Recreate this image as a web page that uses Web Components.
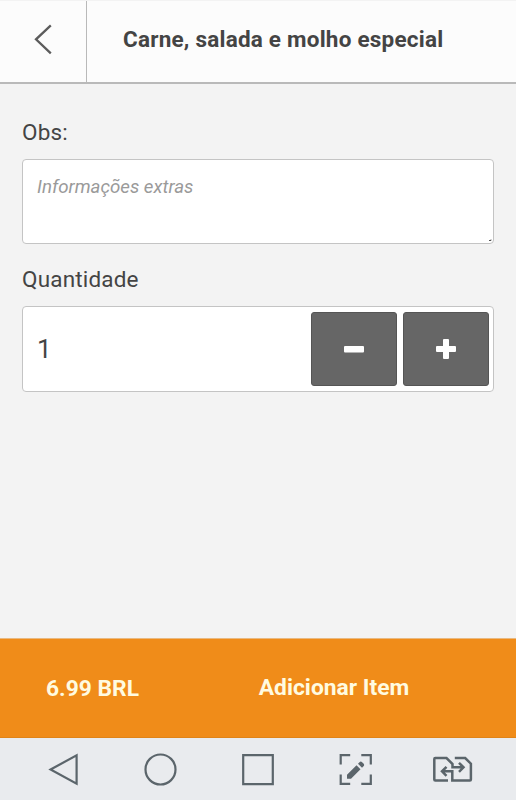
<!DOCTYPE html>
<html lang="pt-BR">
<head>
<meta charset="utf-8">
<meta name="viewport" content="width=device-width, initial-scale=1">
<title>Carne, salada e molho especial</title>
<style>
	body {
		margin: 0;
		height: 100vh;
		display: flex;
		flex-direction: column;
		overflow: hidden;
		background: #f3f3f3;
		color: #444;
		font-family: Roboto, "Liberation Sans", sans-serif;
	}
	main {
		flex: 1;
		min-height: 0;
		padding: 33px 22px 0;
	}
</style>
</head>
<body>
	<page-header>Carne, salada e molho especial</page-header>
	<main>
		<form-field label="Obs:">
			<note-input placeholder="Informações extras"></note-input>
		</form-field>
		<form-field label="Quantidade">
			<quantity-stepper value="1"></quantity-stepper>
		</form-field>
	</main>
	<order-bar>
		<span slot="price">6.99 BRL</span>
		Adicionar Item
	</order-bar>
	<system-nav></system-nav>

<script>
	function attachTemplate(host, html) {
		const template = document.createElement("template");
		template.innerHTML = html;
		host.attachShadow({ mode: "open" }).appendChild(template.content.cloneNode(true));
	}

	class PageHeader extends HTMLElement {
		constructor() {
			super();
			attachTemplate(this, `
				<style>
					:host {
						display: flex;
						flex: none;
						box-sizing: border-box;
						height: 84px;
						background: #fcfcfc;
						border-top: 1px solid #f3f3f3;
						border-bottom: 2px solid #b9b9b9;
					}
					button {
						width: 87px;
						padding: 0;
						border: 0;
						border-right: 1px solid #b9b9b9;
						background: none;
					}
					svg { display: block; }
					h1 {
						flex: 1;
						margin: 0;
						padding: 0 36px;
						font-size: 22.5px;
						font-weight: 700;
						line-height: 76px;
						white-space: nowrap;
						letter-spacing: 0.22px;
					}
				</style>
				<button aria-label="Voltar">
					<svg width="86" height="81" viewBox="0 1 86 81" fill="none" stroke="#5c5c5c" stroke-width="2.3">
						<path d="M50.8 25.3 36 39.3 50.8 53.3"/>
					</svg>
				</button>
				<h1><slot></slot></h1>
			`);
		}
	}

	class FormField extends HTMLElement {
		connectedCallback() {
			if (this.shadowRoot) return;
			attachTemplate(this, `
				<style>
					:host { display: block; margin-bottom: 20px; }
					label {
						display: block;
						height: 32px;
						margin-bottom: 10px;
						font-size: 22.5px;
						letter-spacing: 0.18px;
						line-height: 31px;
					}
				</style>
				<label></label>
				<slot></slot>
			`);
			this.shadowRoot.querySelector("label").textContent = this.getAttribute("label");
		}
	}

	class NoteInput extends HTMLElement {
		connectedCallback() {
			if (this.shadowRoot) return;
			attachTemplate(this, `
				<style>
					:host {
						display: grid;
						box-sizing: border-box;
						height: 85px;
						border: 1px solid #c4c4c4;
						border-radius: 4px;
						background: #fff;
					}
					div, svg { grid-area: 1 / 1; }
					div {
						padding: 15px 14px 0;
						color: #9a9a9a;
						font-size: 18.7px;
						font-style: italic;
						line-height: 24px;
					}
					svg { place-self: end; }
				</style>
				<div role="textbox"></div>
				<svg width="5" height="4"><path d="M1 1.500h2v-1" fill="none" stroke="#555"/></svg>
			`);
			this.shadowRoot.querySelector("div").textContent = this.getAttribute("placeholder");
		}
	}

	class QuantityStepper extends HTMLElement {
		connectedCallback() {
			if (this.shadowRoot) return;
			attachTemplate(this, `
				<style>
					:host {
						display: flex;
						gap: 6px;
						box-sizing: border-box;
						height: 86px;
						padding: 5px 4px 5px 14px;
						border: 1px solid #c4c4c4;
						border-radius: 4px;
						background: #fff;
					}
					output {
						flex: 1;
						font-size: 26px;
						line-height: 74px;
					}
					button {
						display: grid;
						place-items: center;
						width: 86px;
						padding: 0;
						border: 1px solid #555;
						border-radius: 3px;
						background: #666;
					}
				</style>
				<output></output>
				<button id="minus" aria-label="Menos">
					<svg width="22" height="22" fill="#fff"><rect x="1" y="8" width="20" height="6.500" rx="1"/></svg>
				</button>
				<button id="plus" aria-label="Mais">
					<svg width="22" height="22" fill="#fff"><path d="M9 1h4q1 0 1 1v6h6q1 0 1 1v4q0 1-1 1h-6v6q0 1-1 1H9q-1 0-1-1v-6H2q-1 0-1-1V9q0-1 1-1h6V2q0-1 1-1z"/></svg>
				</button>
			`);
			const output = this.shadowRoot.querySelector("output");
			output.textContent = this.getAttribute("value");
			this.shadowRoot.querySelector("#minus").addEventListener("click", () => {
				output.textContent = Math.max(1, Number(output.textContent) - 1);
			});
			this.shadowRoot.querySelector("#plus").addEventListener("click", () => {
				output.textContent = Number(output.textContent) + 1;
			});
		}
	}

	class OrderBar extends HTMLElement {
		constructor() {
			super();
			attachTemplate(this, `
				<style>
					:host {
						display: grid;
						grid-template-columns: 185px 298px;
						flex: none;
						box-sizing: border-box;
						height: 100px;
						border-top: 1px solid #e9b980;
						border-bottom: 1px solid #e08418;
						background: #f08c19;
						color: #fffbe0;
						font-size: 22.8px;
						font-weight: 700;
						text-align: center;
					}
					.price { line-height: 99px; }
					.action { line-height: 97px; }
				</style>
				<div class="price"><slot name="price"></slot></div>
				<div class="action"><slot></slot></div>
			`);
		}
	}

	class SystemNav extends HTMLElement {
		constructor() {
			super();
			attachTemplate(this, `
				<style>
					:host {
						display: grid;
						grid-template-columns: repeat(5, 1fr);
						place-items: center;
						flex: none;
						box-sizing: border-box;
						height: 62px;
						padding: 0 15px;
						background: #e9ebee;
					}
					svg {
						fill: none;
						stroke: #5b656b;
						stroke-width: 2.2;
					}
				</style>
				<svg width="40" height="40"><path d="M6.600 20.500 32.600 6.300v28.400z"/></svg>
				<svg width="40" height="40"><circle cx="19.500" cy="20.500" r="15"/></svg>
				<svg width="40" height="40"><path d="M5.200 6.100h29.600v29H5.200z"/></svg>
				<svg width="40" height="40">
					<path d="M5.700 15.500V6.200h9.500M26.300 6.200h9.500v9.300M35.800 25.500v9.300h-9.500M15.200 34.800H5.700v-9.300"/>
					<path d="m12 25.700 9.500-9.500 4 4-9.500 9.500H12zM23 14.700l1.500-1.500q1.300-1.300 2.600 0l1.400 1.400q1.300 1.300 0 2.600l-1.500 1.500z" fill="#5b656b" stroke="none"/>
				</svg>
				<svg width="42" height="40" viewBox="-1 0 42 40" style="stroke-width: 2.5">
					<path d="M16 31.600H3.300q-1 0-1-1V10q0-1 1-1h11.200l6 6v3.300h10M27 13.800l4.500 4.500-4.500 4.500"/>
					<path d="M22.800 9h10.400l5.700 5.700v15.900q0 1-1 1H20.300v-9.300H10M14.500 17.800 10 22.300l4.500 4.500"/>
				</svg>
			`);
		}
	}

	customElements.define("page-header", PageHeader);
	customElements.define("form-field", FormField);
	customElements.define("note-input", NoteInput);
	customElements.define("quantity-stepper", QuantityStepper);
	customElements.define("order-bar", OrderBar);
	customElements.define("system-nav", SystemNav);
</script>
</body>
</html>
